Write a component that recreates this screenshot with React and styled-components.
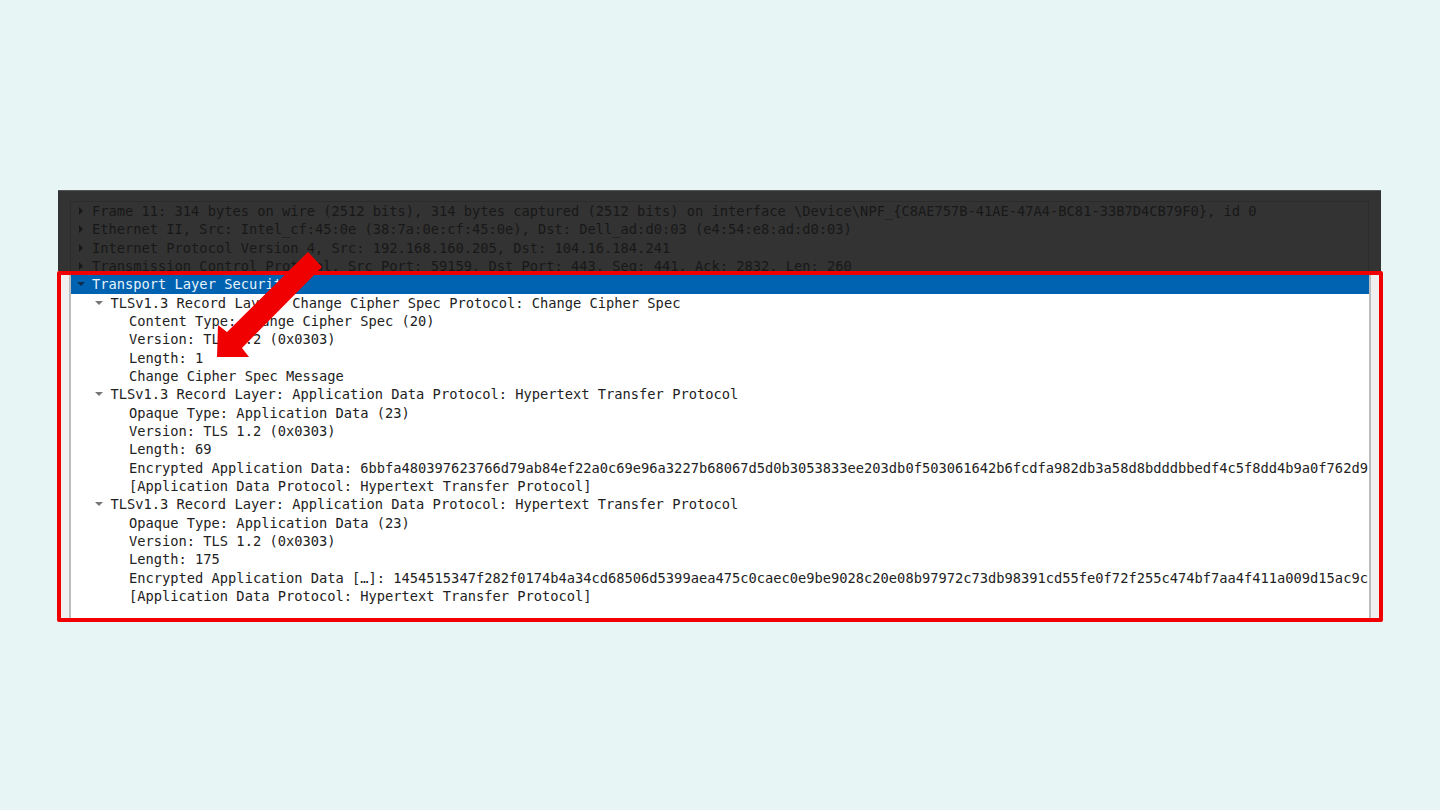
import React from "react";
import styled, { createGlobalStyle } from "styled-components";

const GlobalStyle = createGlobalStyle`
  html, body {
    margin: 0;
    background: #e8f5f5;
  }
`;

const Page = styled.div`
  width: 1440px;
  height: 810px;
  box-sizing: border-box;
  padding: 190px 59px 0 58px;
  overflow: hidden;
  font-family: "DejaVu Sans Mono", "Liberation Mono", monospace;
  font-size: 13.72px;
`;

const Panel = styled.div`
  position: relative;
  display: flex;
  flex-direction: column;
`;

const DimmedPane = styled.div`
  height: 81px;
  box-sizing: border-box;
  padding: 10px 12px 0;
  background: #333333;
  border-top: 1px solid #555;
  overflow: hidden;
`;

const DimmedTree = styled.div`
  display: flex;
  flex-direction: column;
  height: 100%;
  border: 1px solid #2c2c2c;
  border-bottom: 0;
  color: #181818;
`;

const Highlight = styled.section`
  height: 351px;
  box-sizing: border-box;
  margin: 0 -2px 0 -1px;
  padding: 0 8px;
  background: #f0f0f0;
  border: 4px solid #f00000;
  border-radius: 2px;
`;

const Tree = styled.div`
  display: flex;
  flex-direction: column;
  height: 100%;
  background: #fff;
  border-left: 2px solid #bcbcbc;
  border-right: 2px solid #bcbcbc;
  color: #222;
  overflow: hidden;
`;

const Row = styled.div`
  display: flex;
  align-items: center;
  flex: none;
  height: 18.33px;
  line-height: 18.33px;
  padding-left: ${(p) => p.$indent}px;
  white-space: pre;
  overflow: hidden;
  background: ${(p) => (p.$selected ? "#0063b1" : "transparent")};
  color: ${(p) => (p.$selected ? "#e8f2fa" : "inherit")};
`;

const HeaderRow = styled(Row)`
  height: 18.6px;
`;

const RowText = styled.span`
  flex: none;
`;

const CaretSlot = styled.span`
  flex: none;
  display: flex;
  justify-content: center;
  width: 14px;
  margin-right: 4.5px;
`;

const Caret = styled.span`
  width: 0;
  height: 0;
  border-style: solid;
  border-color: transparent;
  ${(p) =>
    p.$open
      ? `border-width: 4px 4px 0; border-top-color: ${p.$color};`
      : `border-width: 4px 0 4px 4px; border-left-color: ${p.$color};`}
`;

const Arrow = styled.svg`
  position: absolute;
  left: 142px;
  top: 50px;
  width: 140px;
  height: 130px;
  pointer-events: none;
`;

const collapsed = [
  "Frame 11: 314 bytes on wire (2512 bits), 314 bytes captured (2512 bits) on interface \\Device\\NPF_{C8AE757B-41AE-47A4-BC81-33B7D4CB79F0}, id 0",
  "Ethernet II, Src: Intel_cf:45:0e (38:7a:0e:cf:45:0e), Dst: Dell_ad:d0:03 (e4:54:e8:ad:d0:03)",
  "Internet Protocol Version 4, Src: 192.168.160.205, Dst: 104.16.184.241",
  "Transmission Control Protocol, Src Port: 59159, Dst Port: 443, Seq: 441, Ack: 2832, Len: 260",
];

const records = [
  {
    title: "TLSv1.3 Record Layer: Change Cipher Spec Protocol: Change Cipher Spec",
    fields: [
      "Content Type: Change Cipher Spec (20)",
      "Version: TLS 1.2 (0x0303)",
      "Length: 1",
      "Change Cipher Spec Message",
    ],
  },
  {
    title: "TLSv1.3 Record Layer: Application Data Protocol: Hypertext Transfer Protocol",
    fields: [
      "Opaque Type: Application Data (23)",
      "Version: TLS 1.2 (0x0303)",
      "Length: 69",
      "Encrypted Application Data: 6bbfa480397623766d79ab84ef22a0c69e96a3227b68067d5d0b3053833ee203db0f503061642b6fcdfa982db3a58d8bdddbbedf4c5f8dd4b9a0f762d9",
      "[Application Data Protocol: Hypertext Transfer Protocol]",
    ],
  },
  {
    title: "TLSv1.3 Record Layer: Application Data Protocol: Hypertext Transfer Protocol",
    fields: [
      "Opaque Type: Application Data (23)",
      "Version: TLS 1.2 (0x0303)",
      "Length: 175",
      "Encrypted Application Data […]: 1454515347f282f0174b4a34cd68506d5399aea475c0caec0e9be9028c20e08b97972c73db98391cd55fe0f72f255c474bf7aa4f411a009d15ac9c",
      "[Application Data Protocol: Hypertext Transfer Protocol]",
    ],
  },
];

export default function App() {
  return (
    <Page>
      <GlobalStyle />
      <Panel>
        <DimmedPane>
          <DimmedTree>
            {collapsed.map((text) => (
              <Row key={text} $indent={2.5}>
                <CaretSlot>
                  <Caret $color="#181818" />
                </CaretSlot>
                <RowText>{text}</RowText>
              </Row>
            ))}
          </DimmedTree>
        </DimmedPane>
        <Highlight>
          <Tree>
            <HeaderRow $indent={2.5} $selected>
              <CaretSlot>
                <Caret $open $color="#0d2f4d" />
              </CaretSlot>
              <RowText>Transport Layer Security</RowText>
            </HeaderRow>
            {records.map((record, i) => (
              <React.Fragment key={i}>
                <Row $indent={21}>
                  <CaretSlot>
                    <Caret $open $color="#777" />
                  </CaretSlot>
                  <RowText>{record.title}</RowText>
                </Row>
                {record.fields.map((field) => (
                  <Row key={field} $indent={58}>
                    <RowText>{field}</RowText>
                  </Row>
                ))}
              </React.Fragment>
            ))}
          </Tree>
        </Highlight>
        <Arrow viewBox="0 0 140 130">
          <polygon points="108,12 122,27 42,108 49,117 17,117 18,85 27,92" fill="#f00000" />
        </Arrow>
      </Panel>
    </Page>
  );
}
